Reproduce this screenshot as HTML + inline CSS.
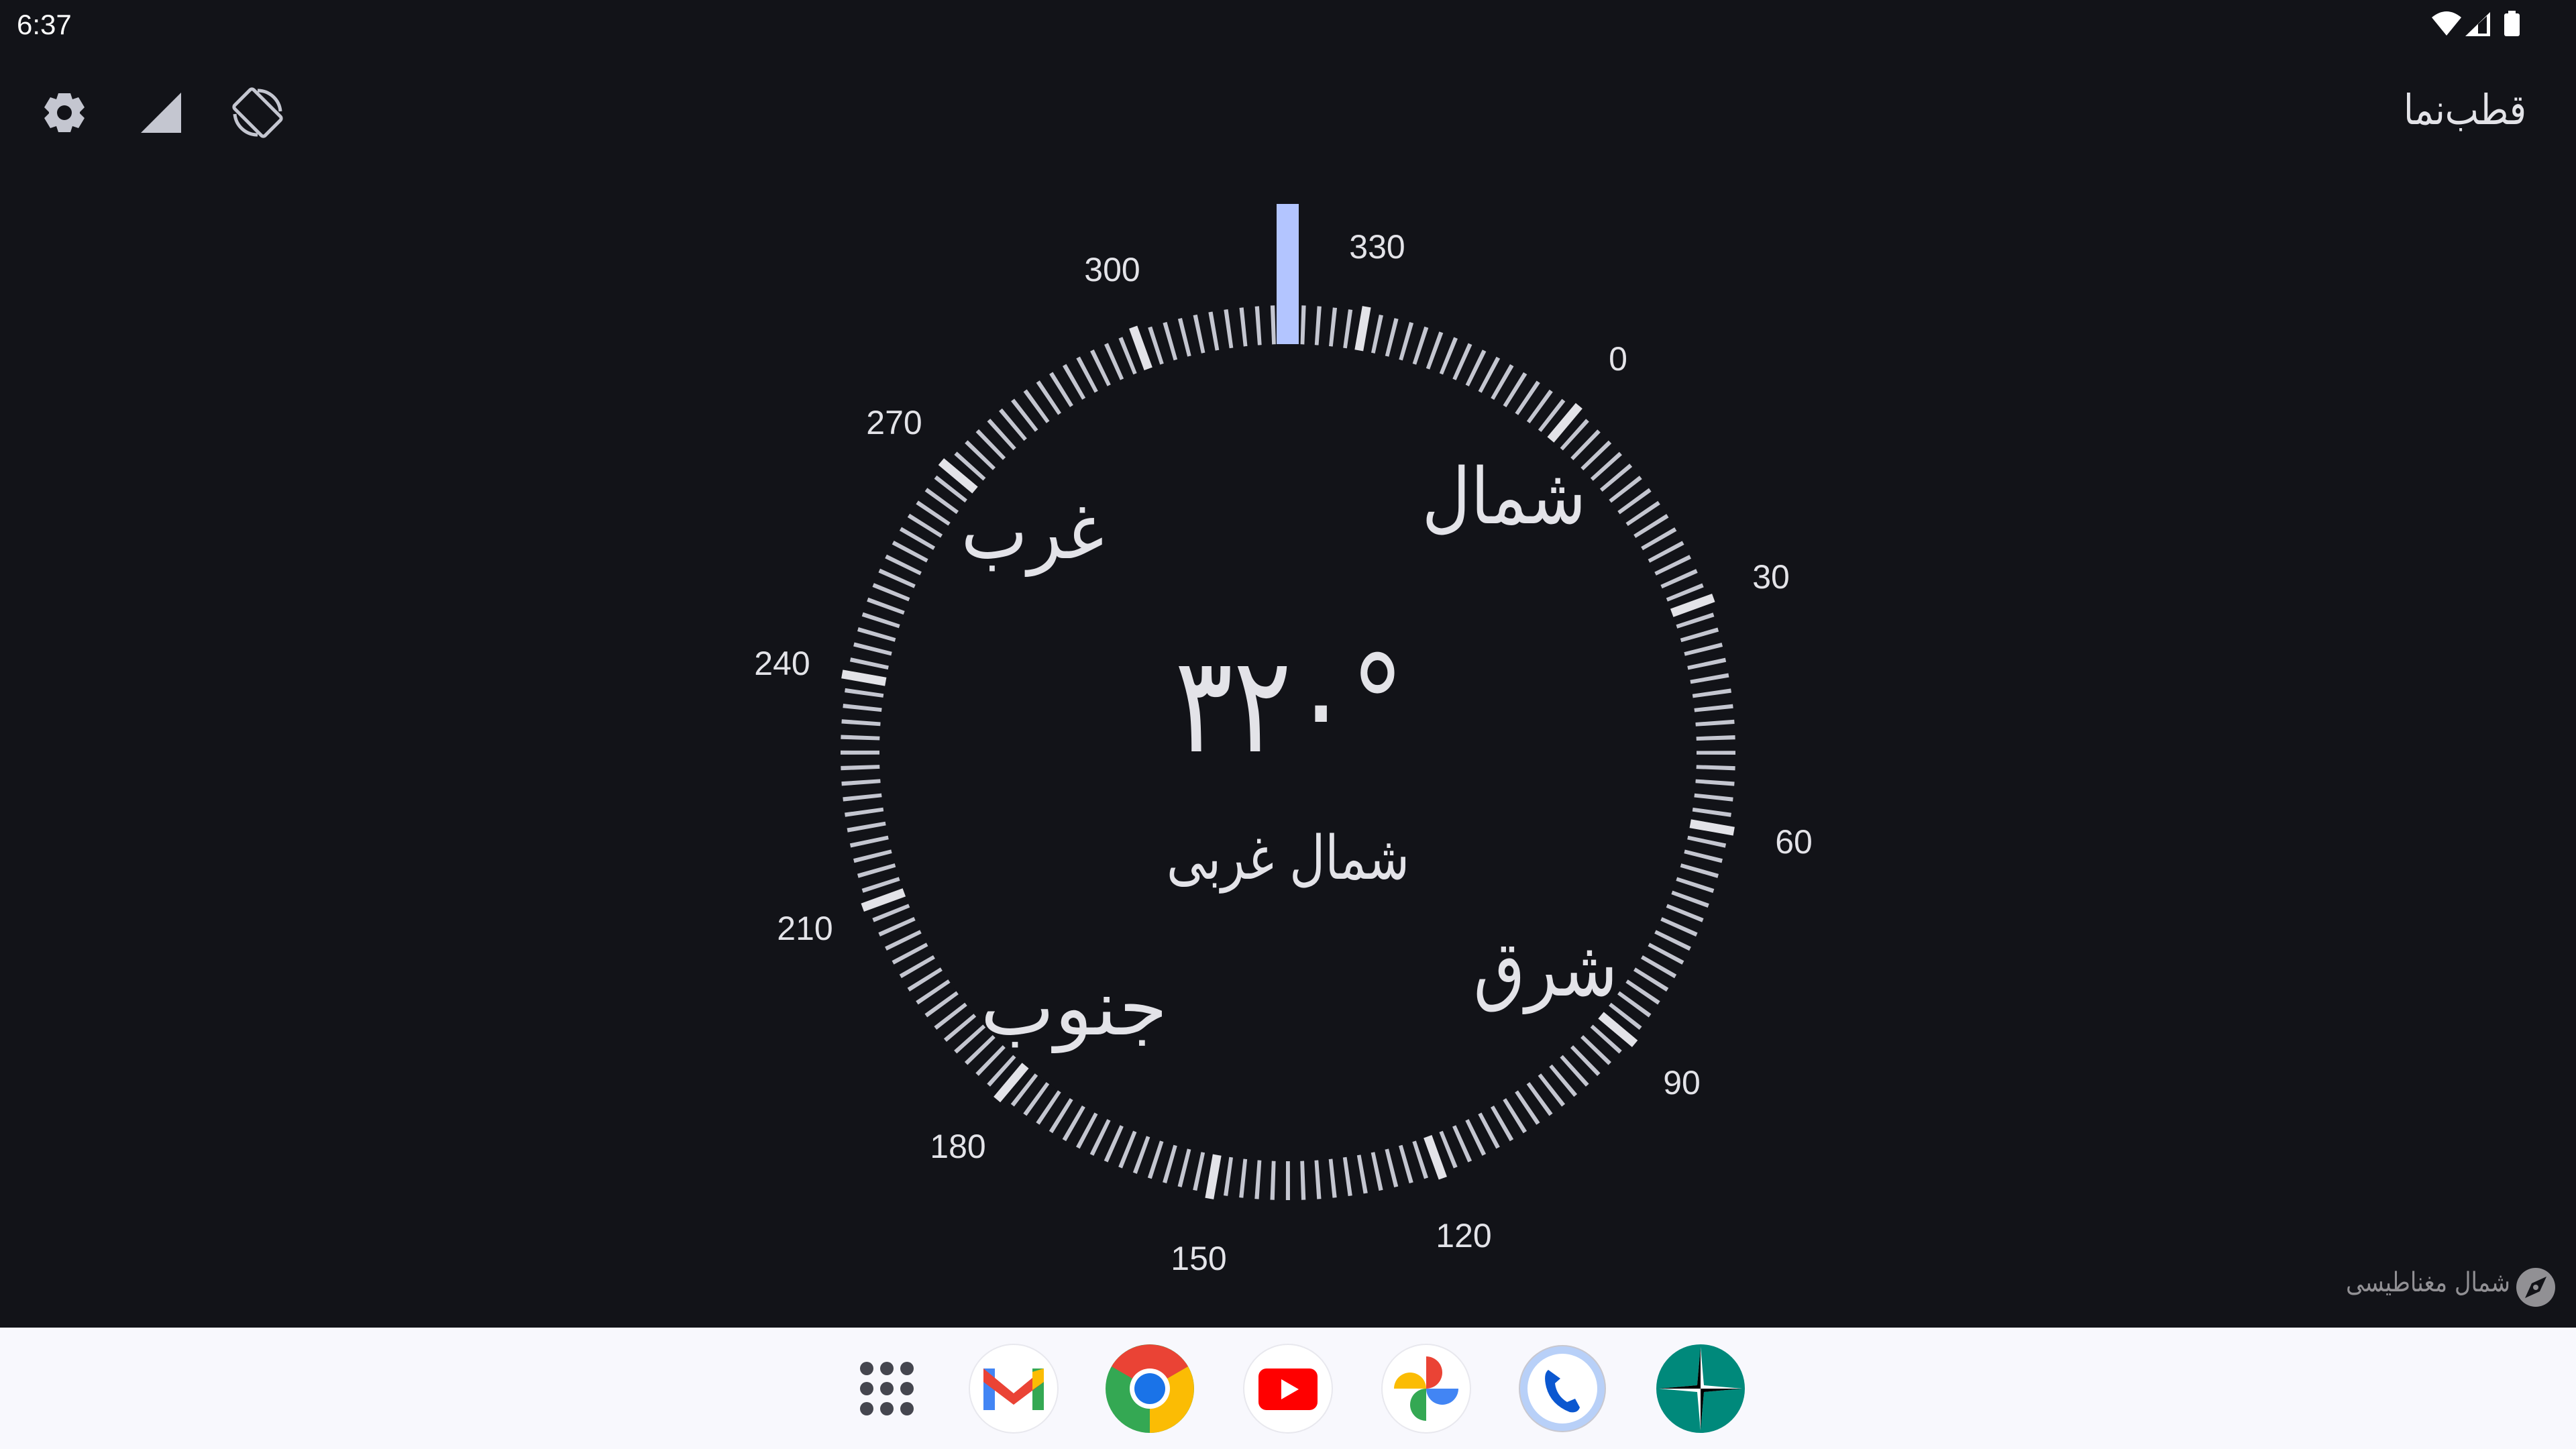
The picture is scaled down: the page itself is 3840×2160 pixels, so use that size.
<!DOCTYPE html>
<html><head><meta charset="utf-8"><style>
html,body{margin:0;padding:0;width:3840px;height:2160px;overflow:hidden;background:#121318;font-family:"Liberation Sans","DejaVu Sans",sans-serif;}
svg{position:absolute;left:0;top:0}
</style></head><body>
<svg width="3840" height="2160" viewBox="0 0 3840 2160" xmlns="http://www.w3.org/2000/svg">
<rect width="3840" height="2160" fill="#121318"/>
<text x="25" y="51" font-family="Liberation Sans, sans-serif" font-size="42" fill="#fff">6:37</text>
<path d="M3625 26 Q3647 8 3669 26 L3647 53 Z" fill="#fff"/>
<path d="M3675 54 L3712 18 L3712 54 Z" fill="#fff"/>
<path d="M3694 50 L3694 36 L3707 24 L3707 50 Z" fill="#121318"/>
<rect x="3733" y="20" width="23" height="34" rx="3" fill="#fff"/><rect x="3739" y="16" width="11" height="5" fill="#fff"/>
<g transform="translate(96,168)" fill="#c4c6d0">
<path d="M-9,-29 h18 l3,9 l9,-3 l9,15 l-7,7 v2 l7,7 l-9,15 l-9,-3 l-3,9 h-18 l-3,-9 l-9,3 l-9,-15 l7,-7 v-2 l-7,-7 l9,-15 l9,3 Z"/>
<circle r="11" fill="#121318"/>
</g>
<path d="M210 198 L270 138 L270 198 Z" fill="#c4c6d0"/>
<g transform="translate(384,168)" fill="none" stroke="#c4c6d0" stroke-width="5">
<rect x="-20" y="-32" width="40" height="64" rx="4" transform="rotate(-45)"/>
<path d="M0 -33 A34 34 0 0 1 34 -2"/><path d="M0 33 A34 34 0 0 1 -34 2"/>
</g>
<text x="3583" y="185" textLength="183" lengthAdjust="spacingAndGlyphs" font-family="DejaVu Sans, sans-serif" font-size="62" fill="#e3e3e8">قطب‌نما</text>
<circle cx="1920" cy="1122" r="638" fill="none" stroke="#c4c6d0" stroke-width="58" stroke-dasharray="6 16.27" stroke-dashoffset="3"/>
<g stroke="#e3e3e8" stroke-width="13">
<line x1="1920" y1="447" x2="1920" y2="609" transform="rotate(40 1920 1122)"/>
<line x1="1920" y1="447" x2="1920" y2="609" transform="rotate(70 1920 1122)"/>
<line x1="1920" y1="447" x2="1920" y2="609" transform="rotate(100 1920 1122)"/>
<line x1="1920" y1="447" x2="1920" y2="609" transform="rotate(130 1920 1122)"/>
<line x1="1920" y1="447" x2="1920" y2="609" transform="rotate(160 1920 1122)"/>
<line x1="1920" y1="447" x2="1920" y2="609" transform="rotate(190 1920 1122)"/>
<line x1="1920" y1="447" x2="1920" y2="609" transform="rotate(220 1920 1122)"/>
<line x1="1920" y1="447" x2="1920" y2="609" transform="rotate(250 1920 1122)"/>
<line x1="1920" y1="447" x2="1920" y2="609" transform="rotate(280 1920 1122)"/>
<line x1="1920" y1="447" x2="1920" y2="609" transform="rotate(310 1920 1122)"/>
<line x1="1920" y1="447" x2="1920" y2="609" transform="rotate(340 1920 1122)"/>
<line x1="1920" y1="447" x2="1920" y2="609" transform="rotate(10 1920 1122)"/>
</g>
<circle cx="1920" cy="1122" r="609" fill="#121318"/>
<rect x="1903" y="304" width="33" height="209" fill="#b3c5ff"/>
<g font-family="Liberation Sans, sans-serif" font-size="50" fill="#e3e3e8" text-anchor="middle" dominant-baseline="central">
<text x="2412" y="535">0</text><text x="2640" y="860">30</text><text x="2674" y="1255">60</text>
<text x="2507" y="1614">90</text><text x="2182" y="1842">120</text><text x="1787" y="1876">150</text>
<text x="1428" y="1709">180</text><text x="1200" y="1384">210</text><text x="1166" y="989">240</text>
<text x="1333" y="630">270</text><text x="1658" y="402">300</text><text x="2053" y="368">330</text>
</g>
<g font-family="DejaVu Sans, sans-serif" font-size="115" fill="#e3e3e8" text-anchor="middle" dominant-baseline="central" lengthAdjust="spacingAndGlyphs">
<text x="2242" y="741" textLength="245" lengthAdjust="spacingAndGlyphs">شمال</text>
<text x="2304" y="1445" textLength="215" lengthAdjust="spacingAndGlyphs">شرق</text>
<text x="1601" y="1503" textLength="279" lengthAdjust="spacingAndGlyphs">جنوب</text>
<text x="1539" y="793" textLength="213" lengthAdjust="spacingAndGlyphs">غرب</text>
</g>
<text x="1751" y="1120" direction="ltr" textLength="343" lengthAdjust="spacingAndGlyphs" font-family="DejaVu Sans, sans-serif" font-size="200" fill="#e3e3e8">۳۲۰°</text>
<text x="1739" y="1310" textLength="362" lengthAdjust="spacingAndGlyphs" font-family="DejaVu Sans, sans-serif" font-size="90" fill="#e3e3e8">شمال غربی</text>
<text x="3497" y="1925" textLength="245" lengthAdjust="spacingAndGlyphs" font-family="DejaVu Sans, sans-serif" font-size="40" fill="#919094">شمال مغناطیسی</text>
<circle cx="3780" cy="1919" r="29" fill="#919094"/>
<path d="M3796 1903 L3786 1925 L3764 1935 L3774 1913 Z" fill="#121318"/><circle cx="3780" cy="1919" r="4" fill="#919094"/>
<rect x="0" y="1979" width="3840" height="181" fill="#f8f8fd"/>
<g fill="#45464f">
<circle cx="1292" cy="2040" r="10"/><circle cx="1322" cy="2040" r="10"/><circle cx="1352" cy="2040" r="10"/>
<circle cx="1292" cy="2070" r="10"/><circle cx="1322" cy="2070" r="10"/><circle cx="1352" cy="2070" r="10"/>
<circle cx="1292" cy="2100" r="10"/><circle cx="1322" cy="2100" r="10"/><circle cx="1352" cy="2100" r="10"/>
</g>
<circle cx="1511" cy="2070" r="66" fill="#fff" stroke="#e8e8ee" stroke-width="2"/>
<rect x="1466" y="2040" width="17" height="62" fill="#4285f4"/><rect x="1539" y="2040" width="17" height="62" fill="#34a853"/>
<path d="M1466 2040 L1511 2077 L1556 2040 L1556 2060 L1511 2094 L1466 2060Z" fill="#ea4335"/>
<path d="M1539 2045 L1556 2040 L1556 2060 L1539 2072Z" fill="#fbbc04"/>
<circle cx="1714" cy="2070" r="66" fill="#34a853"/>
<path d="M1714 2070 L1657 2037 A66 66 0 0 1 1771 2037 Z" fill="#ea4335"/>
<path d="M1714 2070 L1771 2037 A66 66 0 0 1 1714 2136 Z" fill="#fbbc04"/>
<circle cx="1714" cy="2070" r="30" fill="#fff"/><circle cx="1714" cy="2070" r="23" fill="#1a73e8"/>
<circle cx="1920" cy="2070" r="66" fill="#fff" stroke="#e8e8ee" stroke-width="2"/>
<rect x="1876" y="2040" width="88" height="62" rx="12" fill="#ff0000"/><path d="M1910 2056 L1936 2071 L1910 2086Z" fill="#fff"/>
<circle cx="2126" cy="2070" r="66" fill="#fff" stroke="#e8e8ee" stroke-width="2"/>
<path d="M2126 2070 V2022 A24 24 0 0 1 2126 2070Z" fill="#ea4335"/>
<path d="M2126 2070 H2174 A24 24 0 0 1 2126 2070Z" fill="#4285f4"/>
<path d="M2126 2070 V2118 A24 24 0 0 1 2126 2070Z" fill="#34a853"/>
<path d="M2126 2070 H2078 A24 24 0 0 1 2126 2070Z" fill="#fbbc04"/>
<circle cx="2329" cy="2070" r="64" fill="#b8d0f8" stroke="#c8c8d0" stroke-width="2"/><circle cx="2329" cy="2070" r="52" fill="#fff"/>
<path d="M2308 2042 Q2300 2048 2305 2068 Q2312 2094 2340 2105 Q2352 2107 2355 2098 L2348 2085 L2336 2090 Q2320 2080 2318 2062 L2326 2055 Z" fill="#0b57d0"/>
<circle cx="2535" cy="2070" r="66" fill="#00897b"/>
<path d="M2535 2008 L2540 2065 L2597 2070 L2540 2075 L2535 2132 L2530 2075 L2473 2070 L2530 2065Z" fill="#fff"/>
<path d="M2535 2008 L2530 2065 L2473 2070 L2535 2070Z M2535 2070 L2597 2070 L2540 2075 L2535 2132Z" fill="#000"/>
</svg>
</body></html>
